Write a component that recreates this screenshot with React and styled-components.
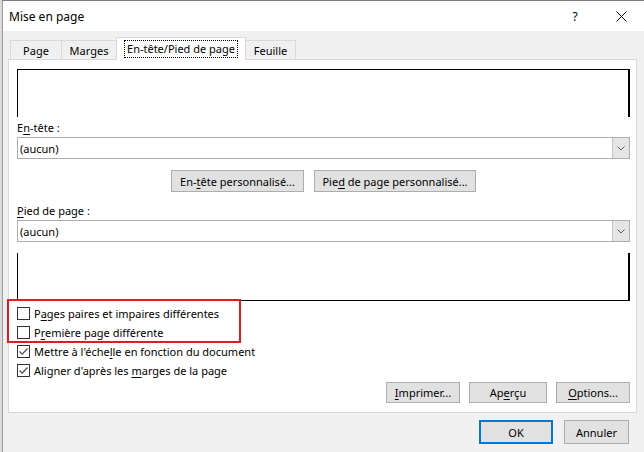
import React from "react";
import styled, { createGlobalStyle } from "styled-components";

const GlobalStyle = createGlobalStyle`
  html, body {
    margin: 0;
    padding: 0;
    background: #e3e3e3;
  }
  body {
    font-family: "Noto Sans", "Liberation Sans", sans-serif;
    font-size: 11px;
    color: #000;
  }
  * {
    box-sizing: border-box;
  }
`;

const Screen = styled.div`
  position: relative;
  width: 644px;
  height: 452px;
  display: flex;
  overflow: hidden;
  background: #dcdcdc;
`;

const Window = styled.div`
  flex: 1;
  margin-left: 2px;
  border-left: 1px solid #9a9a9a;
  border-top: 1px solid #7a7a7a;
  background: #f0f0f0;
  display: flex;
  flex-direction: column;
`;

const TitleBar = styled.div`
  height: 30px;
  background: #fff;
  display: flex;
  align-items: center;
  padding-left: 6px;
`;

const Title = styled.span`
  font-size: 12px;
`;

const TitleButton = styled.div`
  width: 46px;
  height: 30px;
  display: flex;
  align-items: center;
  justify-content: center;
  font-size: 12px;
  margin-left: ${(p) => (p.$first ? "auto" : "0")};
`;

const Body = styled.div`
  padding: 6px 7px 0 5px;
  display: flex;
  flex-direction: column;
`;

const TabStrip = styled.div`
  display: flex;
  align-items: flex-end;
  height: 22px;
  padding-left: 2px;
  position: relative;
  z-index: 1;
`;

const Tab = styled.div`
  width: ${(p) => p.$width}px;
  height: ${(p) => (p.$active ? 23 : 19)}px;
  margin-left: -1px;
  margin-bottom: ${(p) => (p.$active ? -1 : 0)}px;
  border: 1px solid #d9d9d9;
  border-bottom: none;
  background: ${(p) => (p.$active ? "#fff" : "#f0f0f0")};
  display: flex;
  align-items: center;
  justify-content: center;
  padding-top: ${(p) => (p.$active ? 0 : 1)}px;
  &:first-child {
    margin-left: 0;
  }
`;

const FocusText = styled.span`
  outline: 1px dotted #000;
  padding: 0 2px 1px;
  line-height: 15px;
`;

const Panel = styled.div`
  height: 354px;
  background: #fff;
  border: 1px solid #d9d9d9;
  padding: 9px 6px 0 8px;
  display: flex;
  flex-direction: column;
`;

const Preview = styled.div`
  height: 48px;
  border-left: 1px solid #000;
  border-right: 2px solid #000;
  border-top: ${(p) => (p.$top ? "1px solid #000" : "none")};
  border-bottom: ${(p) => (p.$top ? "none" : "1px solid #000")};
  margin-top: ${(p) => p.$mt || 0}px;
`;

const Label = styled.div`
  line-height: 14px;
  margin-top: ${(p) => p.$mt}px;
`;

const Combo = styled.div`
  height: 22px;
  margin-top: 2px;
  border: 1px solid #adadad;
  background: #fff;
  display: flex;
  align-items: center;
  padding-left: 2px;
`;

const ComboText = styled.span`
  flex: 1;
`;

const ComboArrow = styled.div`
  width: 17px;
  height: 20px;
  background: #e5e5e5;
  border-left: 1px solid #c4c4c4;
  display: flex;
  align-items: center;
  justify-content: center;
`;

const ButtonRow = styled.div`
  display: flex;
  justify-content: ${(p) => p.$justify || "center"};
  gap: ${(p) => p.$gap}px;
  margin-top: ${(p) => p.$mt}px;
`;

const Button = styled.div`
  width: ${(p) => p.$width}px;
  height: ${(p) => p.$height || 22}px;
  background: #e1e1e1;
  border: ${(p) => (p.$default ? "2px solid #0078d7" : "1px solid #adadad")};
  display: flex;
  align-items: center;
  justify-content: center;
`;

const CheckList = styled.div`
  margin-top: 3px;
  display: flex;
  flex-direction: column;
`;

const CheckRow = styled.div`
  height: 19px;
  display: flex;
  align-items: center;
  gap: 4px;
`;

const Box = styled.div`
  width: 13px;
  height: 13px;
  border: 1px solid #333;
  background: #fff;
  display: flex;
  align-items: center;
  justify-content: center;
`;

const Footer = styled.div`
  display: flex;
  justify-content: flex-end;
  gap: 11px;
  margin-top: 7px;
  padding-right: 8px;
`;

const Marker = styled.div`
  position: absolute;
  left: 7px;
  top: 299px;
  width: 234px;
  height: 44px;
  border: 2px solid #e5191f;
`;

const U = styled.span`
  text-decoration: underline;
  text-underline-offset: 2px;
`;

function Chevron() {
  return (
    <svg width="8" height="5" viewBox="0 0 8 5">
      <polyline points="0.5,0.5 4,4 7.5,0.5" fill="none" stroke="#606060" strokeWidth="1" />
    </svg>
  );
}

function CheckBox({ checked, children }) {
  return (
    <CheckRow>
      <Box>
        {checked && (
          <svg width="11" height="11" viewBox="0 0 11 11">
            <polyline points="1.5,5.5 4.2,8.2 9.5,2.5" fill="none" stroke="#4a4a4a" strokeWidth="1.2" />
          </svg>
        )}
      </Box>
      <span>{children}</span>
    </CheckRow>
  );
}

function Dropdown({ value }) {
  return (
    <Combo>
      <ComboText>{value}</ComboText>
      <ComboArrow>
        <Chevron />
      </ComboArrow>
    </Combo>
  );
}

export default function App() {
  return (
    <Screen>
      <GlobalStyle />
      <Window>
        <TitleBar>
          <Title>Mise en page</Title>
          <TitleButton $first>?</TitleButton>
          <TitleButton>
            <svg width="11" height="11" viewBox="0 0 11 11">
              <path d="M0.5 0.5 L10.5 10.5 M10.5 0.5 L0.5 10.5" stroke="#000" strokeWidth="1" />
            </svg>
          </TitleButton>
        </TitleBar>

        <Body>
          <TabStrip>
            <Tab $width={52}>Page</Tab>
            <Tab $width={56}>Marges</Tab>
            <Tab $width={130} $active>
              <FocusText>En-tête/Pied de page</FocusText>
            </Tab>
            <Tab $width={51}>Feuille</Tab>
          </TabStrip>

          <Panel>
            <Preview $top />
            <Label $mt={4}>
              E<U>n</U>-tête :
            </Label>
            <Dropdown value="(aucun)" />

            <ButtonRow $gap={10} $mt={11}>
              <Button $width={133}>
                <span>
                  En-<U>t</U>ête personnalisé...
                </span>
              </Button>
              <Button $width={162}>
                <span>
                  Pie<U>d</U> de page personnalisé...
                </span>
              </Button>
            </ButtonRow>

            <Label $mt={12}>
              <U>P</U>ied de page :
            </Label>
            <Dropdown value="(aucun)" />

            <Preview $mt={11} />

            <CheckList>
              <CheckBox>
                P<U>a</U>ges paires et impaires différentes
              </CheckBox>
              <CheckBox>
                P<U>r</U>emière page différente
              </CheckBox>
              <CheckBox checked>
                Mettre à l'éche<U>l</U>le en fonction du document
              </CheckBox>
              <CheckBox checked>
                Aligner d'après les <U>m</U>arges de la page
              </CheckBox>
            </CheckList>

            <ButtonRow $justify="flex-end" $gap={9} $mt={2}>
              <Button $width={74} $height={21}>
                <span>
                  <U>I</U>mprimer...
                </span>
              </Button>
              <Button $width={78} $height={21}>
                <span>
                  Ap<U>e</U>rçu
                </span>
              </Button>
              <Button $width={74} $height={21}>
                <span>
                  <U>O</U>ptions...
                </span>
              </Button>
            </ButtonRow>
          </Panel>

          <Footer>
            <Button $width={74} $height={24} $default>
              OK
            </Button>
            <Button $width={65} $height={24}>
              Annuler
            </Button>
          </Footer>
        </Body>
      </Window>
      <Marker />
    </Screen>
  );
}
